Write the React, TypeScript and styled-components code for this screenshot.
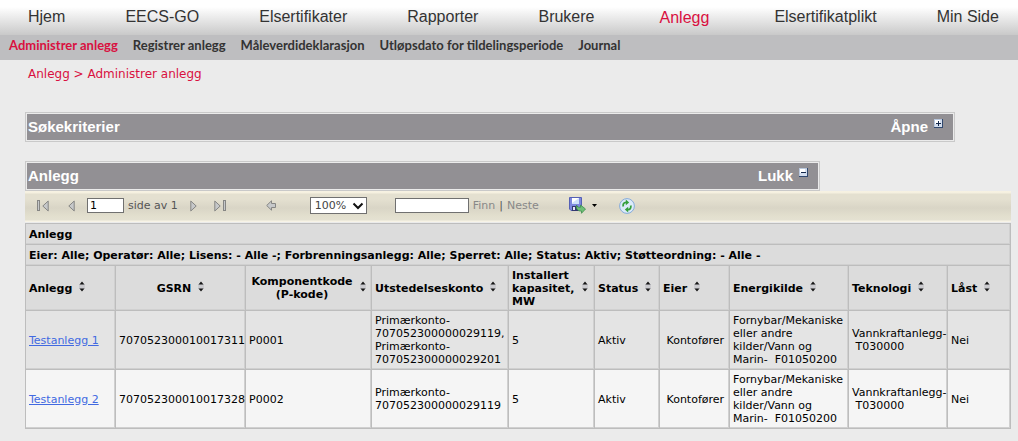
import React from "react";
import styled, { createGlobalStyle, css } from "styled-components";

const GlobalStyle = createGlobalStyle`
  *, *::before, *::after { box-sizing: border-box; }
  body {
    margin: 0;
    background: #ebebeb;
    color: #000;
    font-family: "DejaVu Sans", Verdana, sans-serif;
    font-size: 11px;
    line-height: 13px;
  }
`;

const MainNav = styled.nav`
  display: flex;
  justify-content: space-between;
  height: 35px;
  padding: 0 19px 0 28px;
  background: linear-gradient(#fff 0%, #fff 20%, #c9c9c9 100%);
  font-family: "Liberation Sans", Arial, sans-serif;
  font-size: 16px;
  line-height: 34px;
`;

const MainLink = styled.a<{ $active?: boolean }>`
  color: #333;
  text-decoration: none;
  white-space: nowrap;
  ${(p) => p.$active && css`color: #d9103f; padding: 0 5px; line-height: 36px;`}
`;

const SubNav = styled.nav`
  display: flex;
  gap: 15px;
  height: 25px;
  padding: 0 9px;
  background: #bebec0;
  font-family: Lato, "Noto Sans", sans-serif;
  font-size: 13px;
  font-weight: 700;
  line-height: 20px;
`;

const SubLink = styled.a<{ $active?: boolean }>`
  color: ${(p) => (p.$active ? "#d9103f" : "#333")};
  text-decoration: none;
  white-space: nowrap;
`;

const Breadcrumb = styled.nav`
  padding: 6px 28px 0;
  font-size: 12px;
  line-height: 16px;
  color: #d9103f;
  a { color: inherit; text-decoration: none; }
`;

const Content = styled.main`
  padding: 30px 7px 12px 25px;
`;

const Panel = styled.section<{ $inset: number }>`
  margin-right: ${(p) => p.$inset}px;
  padding: 1px;
  border: 1px solid #c9c9c9;
  & + & { margin-top: 19px; }
`;

const PanelBar = styled.div`
  display: flex;
  align-items: center;
  justify-content: space-between;
  height: 26px;
  padding: 0 10px 0 1px;
  background: #929094;
  color: #fff;
  font-family: "Liberation Sans", Arial, sans-serif;
  font-size: 15px;
  font-weight: 700;
  line-height: 26px;
`;

const PanelTitle = styled.h2`
  margin: 0;
  font-size: inherit;
`;

const PlainButton = styled.button`
  display: inline-flex;
  align-items: center;
  padding: 0;
  border: 0;
  background: none;
  color: inherit;
  font: inherit;
  cursor: pointer;
  svg { display: block; flex: none; }
`;

const PanelToggle = styled(PlainButton)`
  gap: 6px;
  svg { margin-bottom: 8px; }
`;

const Toolbar = styled.div`
  display: flex;
  align-items: center;
  gap: 28px;
  height: 31px;
  padding: 0 12px 2px;
  background: linear-gradient(#f7f2e3 0, #f5f0df 2px, #e4e0d0 3px, #e4e0d0 8px, #d9d5c6 17px, #e2dfce 25px, #e4e1d2 29px, #f7f3e6 30px, #f7f3e6 31px);
  color: #555;
`;

const ToolGroup = styled.div<{ $gap?: number; $start?: number }>`
  display: flex;
  align-items: center;
  gap: ${(p) => p.$gap ?? 4}px;
  margin-left: ${(p) => p.$start ?? 0}px;
  white-space: nowrap;
`;

const TextBox = styled.input<{ $width: number }>`
  width: ${(p) => p.$width}px;
  height: 15px;
  padding: 0 2px;
  border: 1px solid #707070;
  border-radius: 0;
  background: #fff;
  color: #000;
  font: inherit;
`;

const SelectWrap = styled.span`
  position: relative;
  display: inline-flex;
  svg { position: absolute; right: 3px; top: 5px; pointer-events: none; }
`;

const ZoomSelect = styled.select`
  appearance: none;
  width: 57px;
  height: 17px;
  padding: 0 0 0 4px;
  border: 1px solid #707070;
  border-radius: 0;
  background: #fff;
  color: #444;
  font: inherit;
`;

const FindText = styled.span`
  color: #888;
`;

const ReportTable = styled.table`
  width: 100%;
  margin-top: 1px;
  border-collapse: collapse;
  table-layout: fixed;
  background: #dcdcdc;
`;

const cellFrame = css`
  border: 1px solid #bdbdbd;
  box-shadow: inset -1px -1px 0 #d0d0d0;
`;

const CaptionCell = styled.th`
  height: 21px;
  padding: 0 3px;
  ${cellFrame}
  text-align: left;
`;

const HeadCell = styled.th`
  height: 45px;
  padding: 0 3px;
  ${cellFrame}
`;

const HeadContent = styled.div<{ $center?: boolean }>`
  display: flex;
  align-items: center;
  justify-content: ${(p) => (p.$center ? "center" : "flex-start")};
  gap: 7px;
  text-align: ${(p) => (p.$center ? "center" : "left")};
  white-space: pre;
`;

const SortButton = styled(PlainButton)`
  padding-bottom: 3px;
`;

const BodyRow = styled.tr<{ $light?: boolean }>`
  background: ${(p) => (p.$light ? "#f5f5f5" : "#e4e4e4")};
`;

const Cell = styled.td`
  height: 59px;
  padding: 2px 0 2px 3px;
  ${cellFrame}
  white-space: pre;
`;

const PlantLink = styled.a`
  color: #4169e1;
  text-decoration: underline;
`;

const ToggleIcon = ({ plus }: { plus?: boolean }) => (
  <svg width="9" height="9" viewBox="0 0 9 9" shapeRendering="crispEdges" aria-hidden="true">
    <rect width="9" height="9" fill="#31496f" />
    <rect width="8" height="8" fill="#b9c7dc" />
    <rect x="1" y="1" width="7" height="7" fill="#d3deee" />
    <rect x="1" y="1" width="5" height="4" fill="#fff" />
    <rect x="2" y="4" width="5" height="1" fill="#14284b" />
    {plus && <rect x="4" y="2" width="1" height="5" fill="#14284b" />}
  </svg>
);

const SortIcon = () => (
  <svg width="6" height="11" viewBox="0 0 6 11" aria-hidden="true">
    <rect y="3" width="6" height="5" fill="#cacace" />
    <path d="M0.5 3.5 L3 0.5 L5.5 3.5 Z M0.5 7.5 H5.5 L3 10.5 Z" fill="#151515" />
  </svg>
);

const arrowPaint = { fill: "#c6c8ca", stroke: "#868684", strokeWidth: 1 };

const PageIcon = ({ dir, edge }: { dir: "back" | "forward"; edge?: boolean }) => (
  <svg width={edge ? 12 : 7} height="12" viewBox={edge ? "0 0 12 12" : "5 0 7 12"} aria-hidden="true">
    <g transform={dir === "forward" ? (edge ? "translate(12 0) scale(-1 1)" : "translate(17 0) scale(-1 1)") : undefined}>
      <path d="M11.2 1 V11 L5.8 6 Z" {...arrowPaint} />
      {edge && <rect x="0.5" y="0.5" width="2" height="10" {...arrowPaint} />}
    </g>
  </svg>
);

const ParentIcon = () => (
  <svg width="10" height="11" viewBox="0 0 10 11" aria-hidden="true">
    <path d="M0.7 5.5 L5.5 0.8 V3.5 H9.5 V7.5 H5.5 V10.2 Z" {...arrowPaint} />
  </svg>
);

const ChevronIcon = () => (
  <svg width="12" height="8" viewBox="0 0 12 8" aria-hidden="true">
    <path d="M1.5 1.5 L6 6 L10.5 1.5" fill="none" stroke="#111" strokeWidth="2" />
  </svg>
);

const ExportIcon = () => (
  <svg width="17" height="17" viewBox="0 0 17 17" aria-hidden="true">
    <path d="M0.5 0.5 H12.5 V13.5 H2 L0.5 12 Z" fill="#7d86dd" stroke="#5560b5" />
    <rect x="3" y="1" width="7" height="6" fill="#cfe0fa" />
    <path d="M3 1 H10 L3 6 Z" fill="#fff" />
    <rect x="3" y="9" width="6" height="5" fill="#34386f" />
    <rect x="4" y="10" width="2" height="3" fill="#e3e6f7" />
    <path d="M7.5 8 C8 10 9.5 10.5 11.5 10.3 V8 L16.5 12 L12.5 16.3 V14 C9 14.4 6.8 12 7.5 8 Z" fill="#6fbf76" stroke="#3d8f4c" strokeWidth="0.8" />
  </svg>
);

const CaretIcon = () => (
  <svg width="5" height="3" viewBox="0 0 5 3" aria-hidden="true">
    <path d="M0 0 H5 L2.5 3 Z" fill="#000" />
  </svg>
);

const RefreshIcon = () => (
  <svg width="16" height="16" viewBox="0 0 16 16" aria-hidden="true">
    <circle cx="8" cy="8" r="7.4" fill="#dcebfa" stroke="#86abda" />
    <path d="M4.3 8.6 C3.6 6 5 4.4 7 4.3" fill="none" stroke="#35a03c" strokeWidth="1.8" />
    <path d="M6.8 1.6 L10.2 4.4 L6.8 7.2 Z" fill="#35a03c" />
    <path d="M11.7 7.4 C12.4 10 11 11.6 9 11.7" fill="none" stroke="#35a03c" strokeWidth="1.8" />
    <path d="M9.2 8.8 L5.8 11.6 L9.2 14.4 Z" fill="#35a03c" />
  </svg>
);

const mainItems = ["Hjem", "EECS-GO", "Elsertifikater", "Rapporter", "Brukere", "Anlegg", "Elsertifikatplikt", "Min Side"];
const subItems = ["Administrer anlegg", "Registrer anlegg", "Måleverdideklarasjon", "Utløpsdato for tildelingsperiode", "Journal"];

const columns: { label: string; width?: number; center?: boolean }[] = [
  { label: "Anlegg", width: 90 },
  { label: "GSRN", width: 130, center: true },
  { label: "Komponentkode\n(P-kode)", width: 126, center: true },
  { label: "Utstedelseskonto", width: 137 },
  { label: "Installert\nkapasitet,\nMW", width: 86 },
  { label: "Status", width: 65 },
  { label: "Eier", width: 70 },
  { label: "Energikilde", width: 119 },
  { label: "Teknologi", width: 99 },
  { label: "Låst" },
];

const energy = "Fornybar/Mekaniske\neller andre\nkilder/Vann og\nMarin-  F01050200";
const technology = "Vannkraftanlegg-\n T030000";

const rows = [
  ["Testanlegg 1", "707052300010017311", "P0001", "Primærkonto-\n707052300000029119,\nPrimærkonto-\n707052300000029201", "5", "Aktiv", " Kontofører", energy, technology, "Nei"],
  ["Testanlegg 2", "707052300010017328", "P0002", "Primærkonto-\n707052300000029119", "5", "Aktiv", " Kontofører", energy, technology, "Nei"],
];

export default function App() {
  return (
    <>
      <GlobalStyle />
      <MainNav aria-label="Hovedmeny">
        {mainItems.map((item) => (
          <MainLink key={item} href="#" $active={item === "Anlegg"}>{item}</MainLink>
        ))}
      </MainNav>
      <SubNav aria-label="Undermeny">
        {subItems.map((item, i) => (
          <SubLink key={item} href="#" $active={i === 0}>{item}</SubLink>
        ))}
      </SubNav>
      <Breadcrumb aria-label="Brødsmulesti">
        <a href="#">Anlegg</a> &gt; <a href="#">Administrer anlegg</a>
      </Breadcrumb>
      <Content>
        <Panel $inset={56}>
          <PanelBar>
            <PanelTitle>Søkekriterier</PanelTitle>
            <PanelToggle type="button">Åpne <ToggleIcon plus /></PanelToggle>
          </PanelBar>
        </Panel>
        <Panel $inset={191}>
          <PanelBar>
            <PanelTitle>Anlegg</PanelTitle>
            <PanelToggle type="button">Lukk <ToggleIcon /></PanelToggle>
          </PanelBar>
        </Panel>
        <Toolbar role="toolbar" aria-label="Rapport">
          <ToolGroup $gap={12}>
            <ToolGroup $gap={19}>
              <PlainButton type="button" aria-label="Første side"><PageIcon dir="back" edge /></PlainButton>
              <PlainButton type="button" aria-label="Forrige side"><PageIcon dir="back" /></PlainButton>
            </ToolGroup>
            <ToolGroup>
              <TextBox $width={37} aria-label="Side" defaultValue="1" />
              <span>side av 1</span>
            </ToolGroup>
            <ToolGroup $gap={17}>
              <PlainButton type="button" aria-label="Neste side"><PageIcon dir="forward" /></PlainButton>
              <PlainButton type="button" aria-label="Siste side"><PageIcon dir="forward" edge /></PlainButton>
            </ToolGroup>
          </ToolGroup>
          <ToolGroup $start={12}>
            <PlainButton type="button" aria-label="Tilbake"><ParentIcon /></PlainButton>
          </ToolGroup>
          <ToolGroup $start={6}>
            <SelectWrap>
              <ZoomSelect aria-label="Zoom" defaultValue="100%">
                <option>100%</option>
              </ZoomSelect>
              <ChevronIcon />
            </SelectWrap>
          </ToolGroup>
          <ToolGroup>
            <TextBox $width={74} aria-label="Søketekst" />
            <FindText>Finn</FindText>
            <span>|</span>
            <FindText>Neste</FindText>
          </ToolGroup>
          <ToolGroup $gap={22} $start={2}>
            <ToolGroup $gap={6}>
              <PlainButton type="button" aria-label="Eksporter"><ExportIcon /></PlainButton>
              <CaretIcon />
            </ToolGroup>
            <PlainButton type="button" aria-label="Oppdater"><RefreshIcon /></PlainButton>
          </ToolGroup>
        </Toolbar>
        <ReportTable>
          <colgroup>
            {columns.map((c) => (
              <col key={c.label} width={c.width} />
            ))}
          </colgroup>
          <thead>
            <tr>
              <CaptionCell colSpan={columns.length}>Anlegg</CaptionCell>
            </tr>
            <tr>
              <CaptionCell colSpan={columns.length}>
                Eier: Alle; Operatør: Alle; Lisens: - Alle -; Forbrenningsanlegg: Alle; Sperret: Alle; Status: Aktiv; Støtteordning: - Alle -
              </CaptionCell>
            </tr>
            <tr>
              {columns.map((c) => (
                <HeadCell key={c.label} scope="col">
                  <HeadContent $center={c.center}>
                    <span>{c.label}</span>
                    <SortButton type="button" aria-label="Sorter"><SortIcon /></SortButton>
                  </HeadContent>
                </HeadCell>
              ))}
            </tr>
          </thead>
          <tbody>
            {rows.map((row, r) => (
              <BodyRow key={row[0]} $light={r === 1}>
                {row.map((value, i) => (
                  <Cell key={i}>{i === 0 ? <PlantLink href="#">{value}</PlantLink> : value}</Cell>
                ))}
              </BodyRow>
            ))}
          </tbody>
        </ReportTable>
      </Content>
    </>
  );
}
